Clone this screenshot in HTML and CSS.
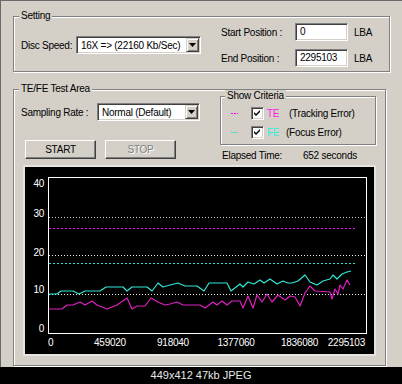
FILE: index.html
```html
<!DOCTYPE html>
<html>
<head>
<meta charset="utf-8">
<link rel="stylesheet" href="styles.css">
</head>
<body>
<div class="window">
  <div class="group setting">
    <span class="group-title">Setting</span>
    <div class="setting-body">
      <div class="speed">
        <span class="speed-lbl">Disc Speed:</span>
        <div class="combo speed-combo">
          <span class="combo-text">16X =&gt; (22160 Kb/Sec)</span>
          <span class="drop"><svg width="7" height="4" viewBox="0 0 7 4"><polygon points="0,0 7,0 3.5,4" fill="#000"/></svg></span>
        </div>
      </div>
      <div class="positions">
        <div class="pos-row"><span class="pos-lbl">Start Position :</span><div class="edit">0</div><span class="unit">LBA</span></div>
        <div class="pos-row"><span class="pos-lbl">End Position :</span><div class="edit">2295103</div><span class="unit">LBA</span></div>
      </div>
    </div>
  </div>

  <div class="group test">
    <span class="group-title">TE/FE Test Area</span>
    <div class="test-top">
      <div class="test-left">
        <div class="sampling">
          <span class="samp-lbl">Sampling Rate :</span>
          <div class="combo samp-combo">
            <span class="combo-text">Normal (Default)</span>
            <span class="drop"><svg width="7" height="4" viewBox="0 0 7 4"><polygon points="0,0 7,0 3.5,4" fill="#000"/></svg></span>
          </div>
        </div>
        <div class="buttons">
          <button class="btn">START</button>
          <button class="btn disabled">STOP</button>
        </div>
      </div>
      <div class="test-right">
        <div class="group criteria">
          <span class="group-title">Show Criteria</span>
          <div class="crit-row">
            <span class="dash dash-te"></span>
            <span class="check"><svg width="9" height="9" viewBox="0 0 9 9"><polygon points="1,3 3,5 7,1 7,3 3,7 1,5" fill="#000"/></svg></span>
            <span class="tag tag-te">TE</span>
            <span>(Tracking Error)</span>
          </div>
          <div class="crit-row">
            <span class="dash dash-fe"></span>
            <span class="check"><svg width="9" height="9" viewBox="0 0 9 9"><polygon points="1,3 3,5 7,1 7,3 3,7 1,5" fill="#000"/></svg></span>
            <span class="tag tag-fe">FE</span>
            <span>(Focus Error)</span>
          </div>
        </div>
        <div class="elapsed"><span class="el-lbl">Elapsed Time:</span><span>652 seconds</span></div>
      </div>
    </div>
    <div class="chart">
      <svg class="plot" width="349" height="187" viewBox="25 167 349 187">
        <rect x="25" y="167" width="349" height="187" fill="#000"/>
        <g shape-rendering="crispEdges" fill="none">
          <line x1="49" y1="217.5" x2="366" y2="217.5" stroke="#c8c8c8" stroke-dasharray="1 2"/>
          <line x1="49" y1="228.5" x2="355" y2="228.5" stroke="#ff00ff" stroke-dasharray="2 2"/>
          <line x1="49" y1="255.5" x2="366" y2="255.5" stroke="#f0f0f0" stroke-dasharray="1 2"/>
          <line x1="49" y1="263.5" x2="355" y2="263.5" stroke="#30e0d8" stroke-dasharray="2 2"/>
          <line x1="49" y1="294.5" x2="366" y2="294.5" stroke="#f0f0f0" stroke-dasharray="1 2"/>
          <rect x="48.5" y="177.5" width="318" height="156" stroke="#fff"/>
        </g>
        <polyline fill="none" stroke="#30e8d8" stroke-width="1.2" stroke-linejoin="round" points="49,294 57,294 61,291 73,291 79,294 85,291 100,291 106,287 123,287 127,291 132,287 147,287 152,291 158,283 163,287 170,285 178,283 185,286 197,286 204,291 209,283 227,283 231,291 240,284 243,287 248,282 254,284 260,280 264,283 270,279 277,284 283,281 288,283 292,283 298,281 305,275 310,282 317,285 323,281 330,279 333,275 337,279 342,274 347,272 351,271"/>
        <polyline fill="none" stroke="#e020c0" stroke-width="1.2" stroke-linejoin="round" points="49,309 62,309 67,305 73,305 80,302 85,305 92,301 97,305 107,309 117,305 127,298 132,309 137,306 145,306 151,298 158,302 165,305 170,304 177,302 183,305 200,305 205,308 213,302 217,305 222,301 227,305 232,301 240,301 243,308 248,296 253,308 257,295 262,302 267,294 272,302 278,295 285,300 290,296 295,297 300,306 305,293 310,286 315,291 330,292 332,299 335,289 338,294 340,285 343,289 347,280 350,285"/>
        <g class="axis-text" fill="#fff">
          <text x="44" y="186.5" text-anchor="end">40</text>
          <text x="44" y="216.5" text-anchor="end">30</text>
          <text x="44" y="255.5" text-anchor="end">20</text>
          <text x="44" y="292.5" text-anchor="end">10</text>
          <text x="44" y="331.5" text-anchor="end">0</text>
          <text x="48" y="345.5">0</text>
          <text x="110" y="345.5" text-anchor="middle">459020</text>
          <text x="173" y="345.5" text-anchor="middle">918040</text>
          <text x="236" y="345.5" text-anchor="middle">1377060</text>
          <text x="299.5" y="345.5" text-anchor="middle">1836080</text>
          <text x="365" y="345.5" text-anchor="end">2295103</text>
        </g>
      </svg>
    </div>
  </div>
</div>
<div class="caption">449x412 47kb JPEG</div>
</body>
</html>
```

FILE: styles.css
```css
* { box-sizing: border-box; }
html, body { margin: 0; padding: 0; }
body {
  width: 402px;
  height: 384px;
  overflow: hidden;
  background: #d4d0c8;
  font-family: "Liberation Sans", Arial, sans-serif;
  font-size: 10px;
  letter-spacing: -0.25px;
  color: #000;
}
.window {
  height: 367px;
  border-top: 1px solid #6a6a6a;
  border-left: 1px solid #6a6a6a;
  padding-top: 15px;
  padding-left: 12px;
}
.group {
  position: relative;
  border: 1px solid #808080;
  box-shadow: 1px 1px 0 #fff, inset 1px 1px 0 #fff;
}
.group-title {
  position: absolute;
  top: -7px;
  left: 5px;
  padding: 0 2px;
  line-height: 12px;
  background: #d4d0c8;
  white-space: nowrap;
}

/* Setting */
.setting {
  width: 377px;
  height: 56px;
  padding: 6px 0 0 7px;
}
.setting-body { display: flex; align-items: center; }
.speed { display: flex; align-items: center; }
.speed-lbl { width: 55px; white-space: nowrap; }
.speed-combo { width: 125px; }
.positions {
  margin-left: 20px;
  display: flex;
  flex-direction: column;
  gap: 8px;
}
.pos-row { display: flex; align-items: center; height: 18px; }
.pos-lbl { width: 74px; white-space: nowrap; }
.unit { margin-left: 6px; }

.combo {
  display: flex;
  align-items: center;
  height: 18px;
  padding: 1px;
  background: #fff;
  border: 1px solid;
  border-color: #808080 #fff #fff #808080;
  box-shadow: inset 1px 1px 0 #404040, inset -1px -1px 0 #d4d0c8;
}
.combo-text { padding-left: 3px; white-space: nowrap; }
.drop {
  margin-left: auto;
  width: 13px;
  height: 14px;
  display: flex;
  align-items: center;
  justify-content: center;
  background: #d4d0c8;
  border: 1px solid;
  border-color: #d4d0c8 #404040 #404040 #d4d0c8;
  box-shadow: inset 1px 1px 0 #fff, inset -1px -1px 0 #808080;
}
.drop svg { display: block; }

.edit {
  width: 53px;
  height: 18px;
  padding: 1px 0 0 4px;
  line-height: 14px;
  background: #fff;
  border: 1px solid;
  border-color: #808080 #fff #fff #808080;
  box-shadow: inset 1px 1px 0 #404040, inset -1px -1px 0 #d4d0c8;
}

/* Test area */
.test {
  width: 373px;
  height: 277px;
  margin-top: 17px;
  padding: 5px 9px 0 9px;
}
.test-top { display: flex; align-items: flex-start; }
.test-left { width: 198px; padding-top: 8px; }
.sampling { display: flex; align-items: center; margin-left: -2px; }
.samp-lbl { width: 76px; white-space: nowrap; }
.samp-combo { width: 103px; }
.buttons {
  display: flex;
  gap: 9px;
  margin-top: 19px;
  margin-left: 2px;
}
.btn {
  width: 71px;
  height: 19px;
  padding: 0;
  margin: 0;
  font-family: "Liberation Sans", Arial, sans-serif;
  font-size: 10px;
  letter-spacing: -0.25px;
  color: #000;
  background: #d4d0c8;
  border: 1px solid;
  border-color: #fff #404040 #404040 #fff;
  box-shadow: inset -1px -1px 0 #808080;
}
.btn.disabled {
  color: #808080;
  text-shadow: 1px 1px 0 #fff;
}

.test-right { margin-top: 1px; }
.criteria {
  width: 156px;
  height: 49px;
  padding: 10px 0 0 10px;
}
.criteria .group-title { left: 4px; }
.crit-row { display: flex; align-items: center; height: 13px; white-space: nowrap; }
.crit-row + .crit-row { margin-top: 6px; }
.dash { width: 7px; height: 1px; }
.dash-te { background: repeating-linear-gradient(90deg, #ff00ff 0 2px, transparent 2px 3px); }
.dash-fe { background: repeating-linear-gradient(90deg, #30e0d8 0 2px, transparent 2px 3px); }
.check {
  margin-left: 13px;
  width: 13px;
  height: 13px;
  padding: 1px;
  background: #fff;
  border: 1px solid;
  border-color: #808080 #fff #fff #808080;
  box-shadow: inset 1px 1px 0 #404040, inset -1px -1px 0 #d4d0c8;
}
.check svg { display: block; }
.tag { margin-left: 3px; }
.tag-te { width: 22px; color: #ff20e0; }
.tag-fe { width: 19px; color: #30f0e0; }

.elapsed {
  margin-top: 5px;
  padding-left: 2px;
  line-height: 12px;
  display: flex;
  white-space: nowrap;
}
.el-lbl { width: 81px; }

.chart {
  margin-top: 3px;
  width: 353px;
  height: 191px;
  border: 2px solid #e6e4de;
  background: #000;
}
.plot { display: block; }
.axis-text text {
  font-family: "Liberation Sans", Arial, sans-serif;
  font-size: 10px;
  letter-spacing: -0.25px;
}

.caption {
  height: 17px;
  line-height: 17px;
  background: #000;
  color: #e8e8e8;
  font-family: "Liberation Sans", Arial, sans-serif;
  font-size: 11px;
  letter-spacing: 0;
  text-align: center;
}
```
